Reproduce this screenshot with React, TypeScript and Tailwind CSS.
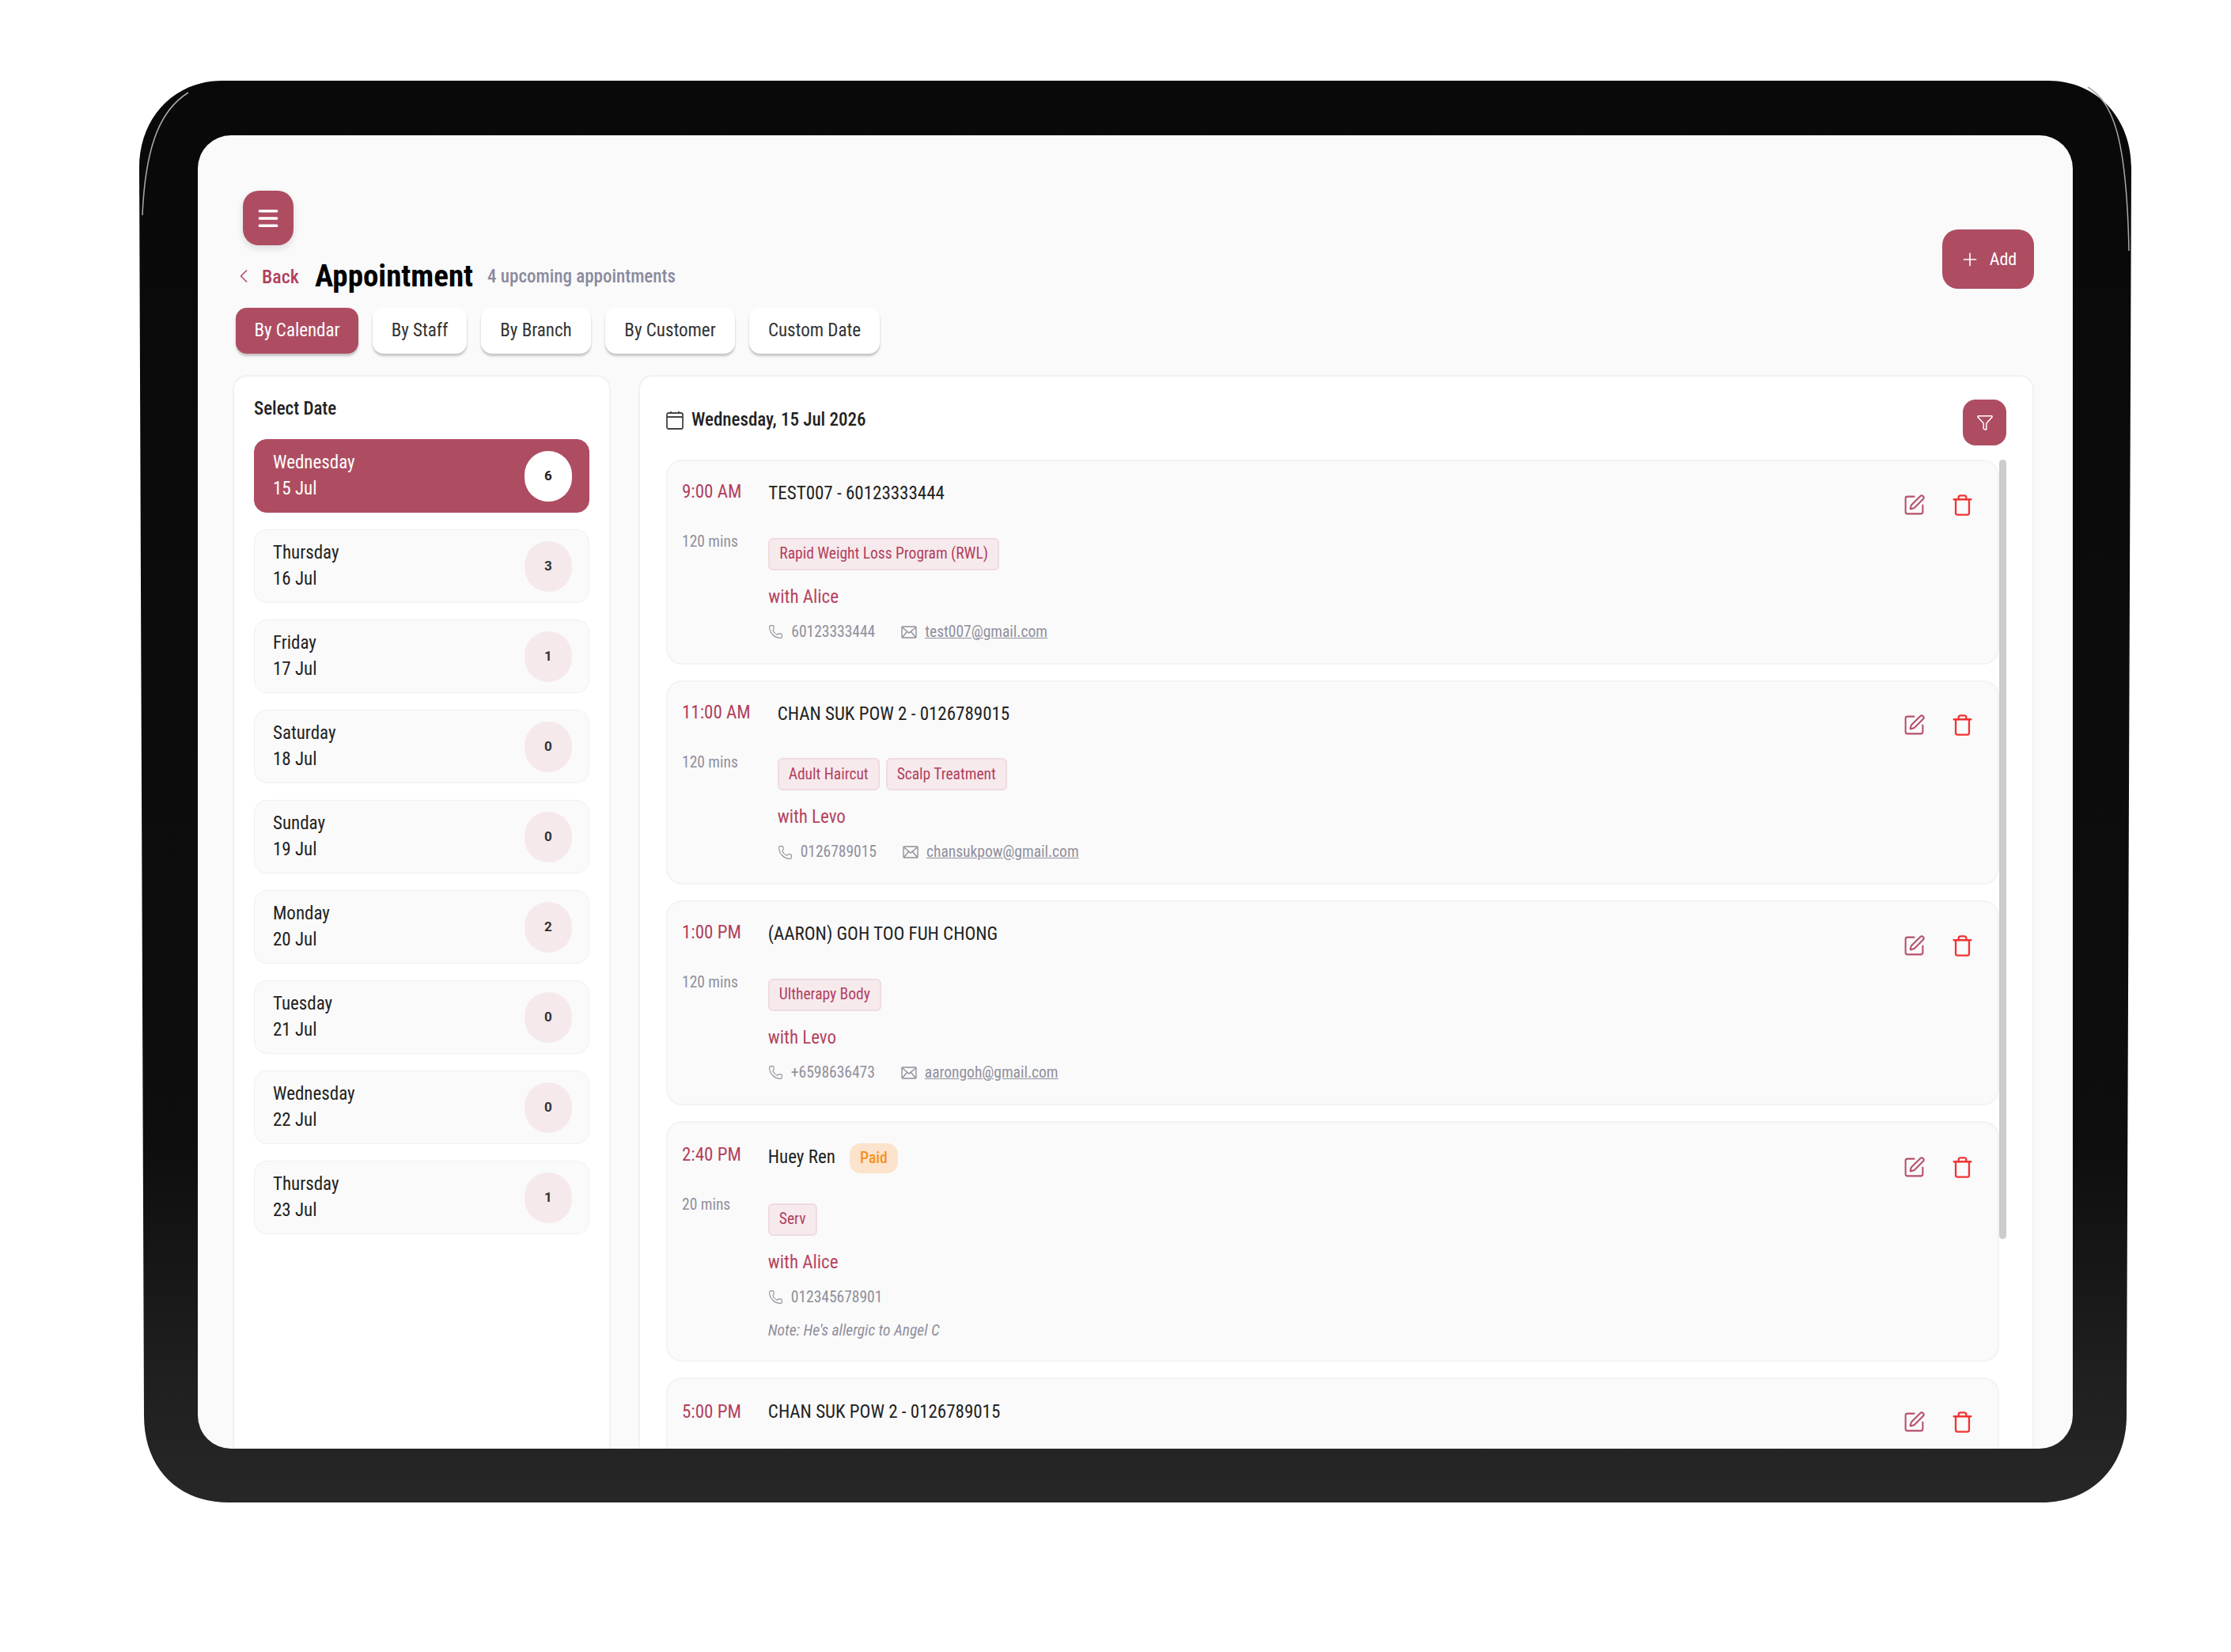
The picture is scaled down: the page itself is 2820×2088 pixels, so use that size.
import { ChevronLeft, Funnel, Menu, Phone, Plus, SquarePen, Trash } from 'lucide-react'

const tabs = [
  { label: 'By Calendar', width: 'w-[155px]' },
  { label: 'By Staff', width: 'w-[119px]' },
  { label: 'By Branch', width: 'w-[139px]' },
  { label: 'By Customer', width: 'w-[164px]' },
  { label: 'Custom Date', width: 'w-[165px]' },
]

const days = [
  { day: 'Wednesday', date: '15 Jul', count: 6 },
  { day: 'Thursday', date: '16 Jul', count: 3 },
  { day: 'Friday', date: '17 Jul', count: 1 },
  { day: 'Saturday', date: '18 Jul', count: 0 },
  { day: 'Sunday', date: '19 Jul', count: 0 },
  { day: 'Monday', date: '20 Jul', count: 2 },
  { day: 'Tuesday', date: '21 Jul', count: 0 },
  { day: 'Wednesday', date: '22 Jul', count: 0 },
  { day: 'Thursday', date: '23 Jul', count: 1 },
]

type Appt = {
  time: string
  name: string
  mins: string
  tags: string[]
  staff: string
  phone: string
  email?: string
  paid?: boolean
  note?: string
}

const appts: Appt[] = [
  { time: '9:00 AM', name: 'TEST007 - 60123333444', mins: '120 mins', tags: ['Rapid Weight Loss Program (RWL)'], staff: 'with Alice', phone: '60123333444', email: 'test007@gmail.com' },
  { time: '11:00 AM', name: 'CHAN SUK POW 2 - 0126789015', mins: '120 mins', tags: ['Adult Haircut', 'Scalp Treatment'], staff: 'with Levo', phone: '0126789015', email: 'chansukpow@gmail.com' },
  { time: '1:00 PM', name: '(AARON) GOH TOO FUH CHONG', mins: '120 mins', tags: ['Ultherapy Body'], staff: 'with Levo', phone: '+6598636473', email: 'aarongoh@gmail.com' },
  { time: '2:40 PM', name: 'Huey Ren', mins: '20 mins', tags: ['Serv'], staff: 'with Alice', phone: '012345678901', paid: true, note: "Note: He's allergic to Angel C" },
]

function MailIcon() {
  return (
    <svg width="20" height="18" viewBox="0 0 20 18" fill="none" stroke="currentColor" strokeWidth="1.4" className="shrink-0">
      <rect x="1" y="2" width="18" height="14" rx="1" />
      <path d="M1.5 3 10 10l8.5-7M1.5 15.500 7.500 8.500M18.500 15.500l-6-7" />
    </svg>
  )
}

function CalendarIcon() {
  return (
    <svg width="22" height="24" viewBox="0 0 22 24" fill="none" stroke="#444" strokeWidth="1.8" className="shrink-0">
      <rect x="1" y="3" width="20" height="20" rx="2" />
      <path d="M1 8h20M6 1v2M16 1v2" />
    </svg>
  )
}

function DateItem({ d, active }: { d: (typeof days)[number]; active: boolean }) {
  return (
    <div className={`flex h-[93px] items-center justify-between rounded-[16px] border pl-[23px] pr-[21px] ${active ? 'border-[#ae4d62] bg-[#ae4d62] text-white' : 'border-[#f0f0f0] bg-[#fafafa] text-[#222]'}`}>
      <div className="pb-[2px] text-[23px] leading-[33px] [font-stretch:75%]">
        <div>{d.day}</div>
        <div>{d.date}</div>
      </div>
      <div className={`flex h-[64px] w-[60px] items-center justify-center rounded-full text-[17px] font-bold ${active ? 'bg-white text-[#222]' : 'bg-[#f6e9ec] text-[#333]'}`}>{d.count}</div>
    </div>
  )
}

function ActionIcons() {
  return (
    <div className="mt-[16px] flex h-[30px] items-center gap-[32px]">
      <SquarePen size={29} strokeWidth={1.7} className="text-[#b5506a]" />
      <Trash size={29} strokeWidth={1.9} className="text-[#f23333]" />
    </div>
  )
}

function ApptCard({ a }: { a: Appt }) {
  return (
    <div className={`flex shrink-0 justify-between rounded-[20px] border-2 border-[#f3f3f3] bg-[#fafafa] pl-[18px] pr-[30px] ${a.paid ? 'pb-[24px] pt-[26px]' : 'pb-[26px] pt-[24px]'}`}>
      <div className="flex gap-[34px]">
        <div className="flex flex-col">
          <div className="h-[30px] text-[23px] leading-[30px] text-[#b23f5c] [font-stretch:75%]">{a.time}</div>
          <div className="mt-[35px] text-[19.5px] leading-[26px] text-[#8f8f9c] [font-stretch:75%]">{a.mins}</div>
        </div>
        <div className="flex flex-col">
          <div className="flex min-h-[30px] items-center gap-[18px]">
            <span className="text-[23px] text-[#222] [font-stretch:75%]">{a.name}</span>
            {a.paid && <span className="flex h-[38px] w-[61px] items-center justify-center rounded-[14px] bg-[#fbe3cc] text-[19.5px] font-medium text-[#f7921e] [font-stretch:75%]">Paid</span>}
          </div>
          <div className="mt-[38px] flex gap-[8px]">
            {a.tags.map(t => (
              <span key={t} className="flex h-[41px] items-center rounded-[6px] border-2 border-[#f0dbe1] bg-[#f6eaed] px-[12px] text-[19.5px] text-[#b23f5c] [font-stretch:75%]">{t}</span>
            ))}
          </div>
          <div className="mt-[19px] text-[23px] leading-[30px] text-[#b5445f] [font-stretch:75%]">{a.staff}</div>
          <div className="mt-[16px] flex h-[26px] items-center text-[19.5px] text-[#8f8f9c] [font-stretch:75%]">
            <Phone size={19} strokeWidth={1.4} className="mr-[10px] shrink-0" />
            <span>{a.phone}</span>
            {a.email && (
              <>
                <span className="ml-[33px] mr-[10px] flex"><MailIcon /></span>
                <span className="underline">{a.email}</span>
              </>
            )}
          </div>
          {a.note && <div className="mt-[16px] text-[19.5px] italic leading-[26px] text-[#8f8f9c] [font-stretch:75%]">{a.note}</div>}
        </div>
      </div>
      <ActionIcons />
    </div>
  )
}

export default function App() {
  return (
    <div className="h-[2088px] w-[2820px] overflow-hidden bg-white pl-[176px] pt-[102px] [font-family:Roboto,sans-serif]">
      <div className="relative h-[1797px] w-[2518px] pl-[74px] pr-[74px] pt-[69px]">
        {/* tablet body */}
        <svg className="absolute inset-0" width="2518" height="1797" viewBox="0 0 2518 1797">
          <defs>
            <linearGradient id="bez" x1="0" y1="0" x2="0" y2="1">
              <stop offset="0" stopColor="#090909" />
              <stop offset="0.75" stopColor="#0e0e0e" />
              <stop offset="0.92" stopColor="#202020" />
              <stop offset="1" stopColor="#272727" />
            </linearGradient>
          </defs>
          <path d="M105 0H2413C2475 0 2518 48 2518 110L2512 1687C2512 1755 2465 1797 2405 1797H113C50 1797 6 1755 6 1687L0 110C0 48 43 0 105 0Z" fill="url(#bez)" />
          <path d="M62 15C30 35 8 75 4 170" fill="none" stroke="#aaaaaa" strokeWidth="1.500" />
          <path d="M2463 8C2495 28 2512 70 2515 215" fill="none" stroke="#aaaaaa" strokeWidth="1.500" />
        </svg>

        <div className="relative flex h-[1660px] w-[2370px] flex-col overflow-hidden rounded-[42px] bg-[#fafafa] pl-[48px] pr-[49px] pt-[70px]">
          <div className="ml-[9px] flex h-[69px] w-[64px] items-center justify-center self-start rounded-[20px] bg-[#ae4d62] text-white shadow-[0_4px_10px_rgba(0,0,0,0.12)]">
            <Menu size={32} strokeWidth={2.6} />
          </div>

          <div className="relative">
            <div className="flex h-[78px] items-center">
              <ChevronLeft size={28} strokeWidth={1.5} className="-ml-[4px] text-[#b5506a]" />
              <span className="ml-[9px] pt-[2px] text-[24px] font-medium text-[#b23f5c] [font-stretch:75%]">Back</span>
              <span className="ml-[20px] text-[39px] font-bold text-black [font-stretch:75%]">Appointment</span>
              <span className="ml-[18px] pt-[2px] text-[23px] font-medium text-[#8a8a9e] [font-stretch:75%]">4 upcoming appointments</span>
            </div>
            <div className="absolute right-0 top-[-20px] flex h-[75px] w-[116px] items-center justify-center gap-[12px] rounded-[20px] bg-[#ae4d62] text-[22px] text-white">
              <Plus size={26} strokeWidth={1.5} />
              <span className="[font-stretch:87.5%]">Add</span>
            </div>
          </div>

          <div className="mt-[1px] flex gap-[18px]">
            {tabs.map((t, i) => (
              <div key={t.label} className={`flex h-[58px] items-center justify-center rounded-[14px] text-[23px] shadow-[0_3px_3px_rgba(0,0,0,0.22)] [font-stretch:75%] ${t.width} ${i === 0 ? 'bg-[#ae4d62] text-white' : 'bg-white text-[#333]'}`}>{t.label}</div>
            ))}
          </div>

          <div className="-ml-[4px] mt-[27px] flex min-h-0 flex-1 gap-[35px]">
            <div className="h-[1400px] w-[478px] shrink-0 rounded-t-[18px] border-2 border-[#f1f1f1] bg-white px-[25px] pt-[26px]">
              <div className="text-[23px] font-medium leading-[30px] text-[#222] [font-stretch:75%]">Select Date</div>
              <div className="mt-[23px] flex flex-col gap-[21px]">
                {days.map((d, i) => <DateItem key={d.date} d={d} active={i === 0} />)}
              </div>
            </div>

            <div className="h-[1400px] min-w-0 flex-1 rounded-t-[18px] border-2 border-[#f1f1f1] bg-white pl-[33px] pr-[33px] pt-[29px]">
              <div className="flex h-[58px] items-center justify-between">
                <div className="flex items-center gap-[10px] pb-[6px]">
                  <CalendarIcon />
                  <span className="text-[23px] font-medium text-[#222] [font-stretch:75%]">Wednesday, 15 Jul 2026</span>
                </div>
                <div className="flex h-[58px] w-[55px] items-center justify-center rounded-[16px] bg-[#ae4d62] text-white">
                  <Funnel size={22} strokeWidth={1.6} />
                </div>
              </div>
              <div className="relative mt-[18px] flex flex-col gap-[20px] pr-[9px]">
                {/* scrollbar */}
                <div className="absolute right-0 top-0 h-[985px] w-[9px] rounded-full bg-[#cccccc]" />
                {appts.map(a => <ApptCard key={a.time} a={a} />)}
                <div className="flex h-[200px] shrink-0 justify-between rounded-[20px] border-2 border-[#f3f3f3] bg-[#fafafa] pl-[18px] pr-[30px] pt-[27px]">
                  <div className="flex gap-[34px]">
                    <div className="text-[23px] leading-[30px] text-[#b23f5c] [font-stretch:75%]">5:00 PM</div>
                    <div className="text-[23px] leading-[30px] text-[#222] [font-stretch:75%]">CHAN SUK POW 2 - 0126789015</div>
                  </div>
                  <div className="-mt-[3px]"><ActionIcons /></div>
                </div>
              </div>
            </div>
          </div>
        </div>
      </div>
    </div>
  )
}
